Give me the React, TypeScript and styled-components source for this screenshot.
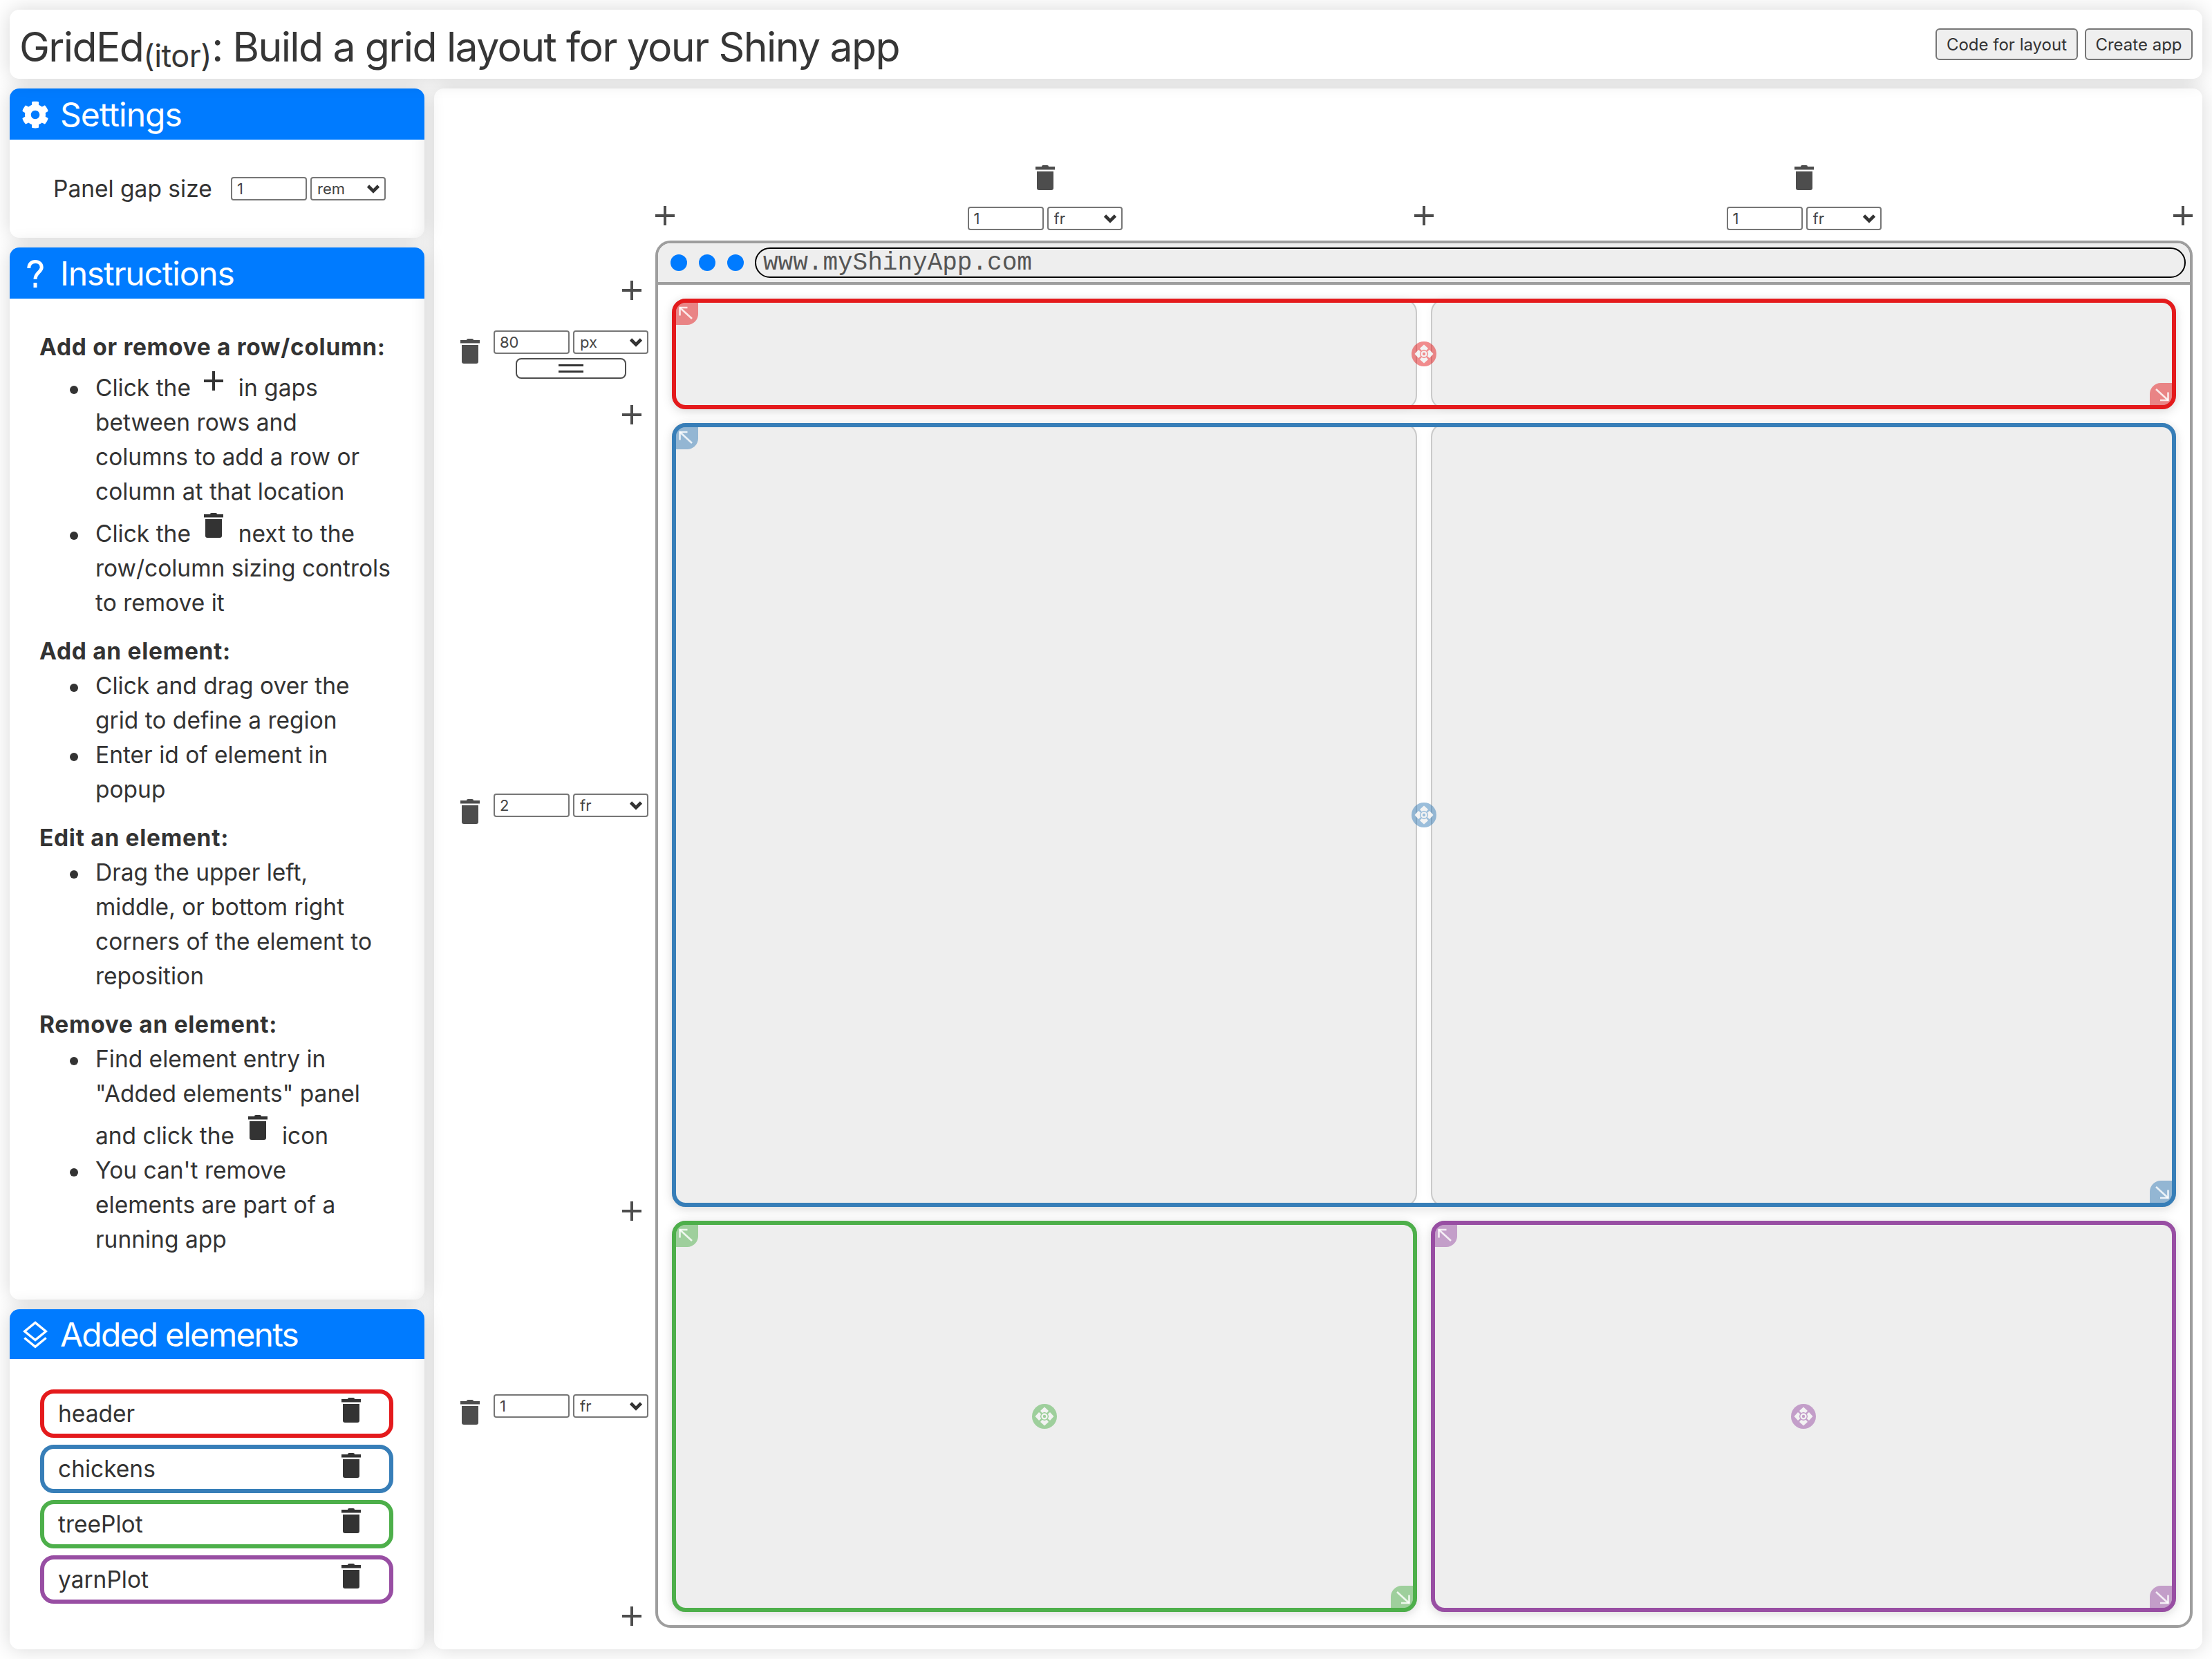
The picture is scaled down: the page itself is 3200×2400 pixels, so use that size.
import React from 'react';
import styled, { createGlobalStyle } from 'styled-components';
import { FaCog } from 'react-icons/fa';

const Global = createGlobalStyle`
  html, body { margin: 0; padding: 0; background: #fff; }
  * { box-sizing: border-box; }
  body { font-family: Inter, "Liberation Sans", sans-serif; color: #333; }
`;

const Page = styled.div`
  width: 3200px;
  height: 2400px;
  padding: 14px;
  display: grid;
  grid-template-columns: 600px 1fr;
  grid-template-rows: 100px 1fr;
  gap: 14px;
  overflow: hidden;
`;

const shadow = '0 0 30px rgba(0, 0, 0, 0.16)';

const Main = styled.main`
  grid-column: 2;
  grid-row: 2;
  background: #fff;
  border-radius: 14px;
  box-shadow: ${shadow};
  display: grid;
  grid-template-columns: 320px 2224px;
  grid-template-rows: 220px 2007px;
`;

const Sidebar = styled.aside`
  grid-column: 1;
  grid-row: 2;
  display: grid;
  grid-template-rows: 216px 1522px 1fr;
  gap: 14px;
  min-height: 0;
`;

const TitleBar = styled.header`
  grid-column: 1 / 3;
  grid-row: 1;
  background: #fff;
  border-radius: 14px;
  box-shadow: ${shadow};
  display: flex;
  align-items: center;
  justify-content: space-between;
  padding: 0 14px;
`;

const Title = styled.h1`
  margin: 6px 0 0;
  font-size: 59px;
  font-weight: 400;
  line-height: 1;
  letter-spacing: -1.65px;
  color: #363636;
  white-space: nowrap;
  sub {
    font-size: 45px;
    vertical-align: -8px;
    line-height: 0;
    letter-spacing: -0.5px;
  }
`;

const Actions = styled.div`
  display: flex;
  gap: 10px;
`;

const ActionButton = styled.button<{ $w: number }>`
  width: ${(p) => p.$w}px;
  height: 46px;
  padding: 0;
  background: #efefef;
  border: 2px solid #767676;
  border-radius: 6px;
  color: #333;
  font-family: inherit;
  font-size: 24px;
  text-align: center;
`;

const Card = styled.section`
  background: #fff;
  border-radius: 14px;
  box-shadow: ${shadow}, inset -22px 0 20px -20px rgba(0, 0, 0, 0.07);
  display: flex;
  flex-direction: column;
  min-height: 0;
`;

const CardHead = styled.h2<{ $h: number; $track: number }>`
  margin: 0;
  flex: none;
  height: ${(p) => p.$h}px;
  padding-top: 2px;
  background: #007bff;
  color: #fff;
  border-radius: 14px 14px 0 0;
  display: flex;
  align-items: center;
  font-size: 48px;
  font-weight: 400;
  line-height: 1;
  letter-spacing: ${(p) => p.$track}px;
`;

const HeadIcon = styled.span`
  width: 73px;
  display: flex;
  justify-content: center;
  align-items: center;
  flex: none;
`;

const SettingsBody = styled.div`
  flex: 1;
  display: flex;
  align-items: center;
  padding-left: 63px;
  font-size: 33.5px;
`;

const GapLabel = styled.span`
  flex: none;
  width: 257px;
`;

const SizeInput = styled.input`
  width: 110px;
  height: 34px;
  padding: 0 7px;
  margin: 0;
  background: #fff;
  border: 2px solid #767676;
  border-radius: 4px;
  color: #444;
  font-family: inherit;
  font-size: 22px;
  outline: none;
`;

const UnitSelect = styled.select`
  appearance: none;
  width: 109px;
  height: 34px;
  padding: 0 0 0 8px;
  margin: 0 0 0 5px;
  border: 2px solid #767676;
  border-radius: 4px;
  color: #444;
  font-family: inherit;
  font-size: 22px;
  background: #fff url("data:image/svg+xml,%3Csvg xmlns='http://www.w3.org/2000/svg' width='20' height='14' viewBox='0 0 20 14'%3E%3Cpath d='M2.5 3 L10 10.5 L17.5 3' fill='none' stroke='%23333' stroke-width='4.6'/%3E%3C/svg%3E") no-repeat right 6px center;
`;

const InstructionBody = styled.div`
  padding: 45px 45px 0 43px;
  font-size: 33.5px;
  line-height: 50px;
`;

const Lead = styled.div`
  font-weight: 700;
  letter-spacing: 0.7px;
  color: #333;
`;

const Steps = styled.ul`
  margin: 0 0 20px;
  padding-left: 81px;
  list-style: none;
  li::before {
    content: '';
    display: inline-block;
    width: 12px;
    height: 12px;
    border-radius: 50%;
    background: #333;
    margin-left: -37px;
    margin-right: 25px;
    vertical-align: 3px;
  }
`;

const InlineIcon = styled.span<{ $lift: number; $top: number }>`
  display: inline-block;
  margin: ${(p) => p.$top}px 12px 0 10px;
  color: #333;
  vertical-align: ${(p) => p.$lift}px;
  line-height: 0;
`;

const ElementList = styled.div`
  padding: 44px 45px 0 44px;
  display: flex;
  flex-direction: column;
  gap: 10px;
`;

const ElementRow = styled.div<{ $c: string }>`
  height: 70px;
  border: 6px solid ${(p) => p.$c};
  border-radius: 20px;
  display: flex;
  justify-content: space-between;
  padding: 0 41px 0 20px;
  font-size: 33.5px;
  line-height: 58px;
  color: #333;
`;

const RowTrash = styled.span`
  margin-top: 6px;
  line-height: 0;
`;

const ColumnGutter = styled.div`
  grid-column: 2;
  grid-row: 1;
  display: grid;
  grid-template-columns: 28px 1070px 28px 1070px 28px;
  align-items: end;
`;

const Plus = styled.span<{ $side?: boolean }>`
  display: block;
  width: 28px;
  height: 28px;
  line-height: 0;
  color: #4d4d4d;
  margin-bottom: ${(p) => (p.$side ? 0 : 22)}px;
  ${(p) => (p.$side ? 'justify-self: end; margin-right: 20px;' : '')}
`;

const ColumnControl = styled.div`
  display: flex;
  flex-direction: column;
  align-items: center;
  margin-bottom: 15px;
  padding-left: 1px;
  color: #4d4d4d;
`;

const ColumnTrash = styled.span`
  line-height: 0;
  margin-bottom: 24px;
`;

const Pair = styled.div`
  display: flex;
`;

const RowGutter = styled.div`
  grid-column: 1;
  grid-row: 2;
  display: grid;
  grid-template-rows: 28px 152px 28px 1124px 28px 558px 28px;
  padding-top: 58px;
  align-items: center;
`;

const RowControl = styled.div<{ $nudge: number }>`
  justify-self: end;
  margin: ${(p) => p.$nudge}px 10px 0 0;
  display: flex;
  align-items: center;
  gap: 20px;
  color: #4d4d4d;
`;

const RowTrashSlot = styled.span<{ $up: number }>`
  line-height: 0;
  margin-bottom: ${(p) => p.$up}px;
`;

const RowStack = styled.div`
  display: flex;
  flex-direction: column;
  align-items: center;
  gap: 6px;
`;

const DragBar = styled.button<{ $hidden?: boolean }>`
  width: 160px;
  height: 30px;
  padding: 0;
  background: #fff;
  border: 2px solid #4d4d4d;
  border-radius: 8px;
  display: flex;
  flex-direction: column;
  align-items: center;
  justify-content: center;
  gap: 6px;
  visibility: ${(p) => (p.$hidden ? 'hidden' : 'visible')};
  i {
    display: block;
    width: 36px;
    height: 3px;
    background: #333;
  }
`;

const Frame = styled.div`
  grid-column: 2;
  grid-row: 2;
  border: 4px solid #9e9e9e;
  border-radius: 22px;
  display: flex;
  flex-direction: column;
`;

const BrowserBar = styled.div`
  flex: none;
  height: 60px;
  background: #eee;
  border-bottom: 4px solid #9e9e9e;
  border-radius: 18px 18px 0 0;
  display: flex;
  align-items: center;
  padding: 0 6px 0 18px;
`;

const Dot = styled.span`
  width: 24px;
  height: 24px;
  border-radius: 50%;
  background: #007bff;
  margin-right: 17px;
  flex: none;
`;

const UrlBox = styled.div`
  flex: 1;
  height: 44px;
  margin-left: -1px;
  border: 2px solid #000;
  border-radius: 22px;
  padding-left: 10px;
  font-family: "Liberation Mono", monospace;
  font-size: 36px;
  line-height: 42px;
  color: #555;
`;

const GridArea = styled.div`
  flex: 1;
  display: grid;
  grid-template-columns: 1078px 1078px;
  grid-template-rows: 160px 1134px 566px;
  gap: 20px;
  padding: 20px 20px 0 20px;
`;

const Cell = styled.div<{ $r: number; $c: number }>`
  grid-row: ${(p) => p.$r};
  grid-column: ${(p) => p.$c};
  background: #eee;
  border: 2px solid #c9c9c9;
  border-radius: 20px;
  box-shadow: 0 0 12px rgba(0, 0, 0, 0.04);
`;

const Placed = styled.div<{ $r: number; $c: string; $color: string }>`
  grid-row: ${(p) => p.$r};
  grid-column: ${(p) => p.$c};
  position: relative;
  border: 6px solid ${(p) => p.$color};
  border-radius: 20px;
  box-shadow: 0 4px 16px rgba(0, 0, 0, 0.12);
`;

const CornerHandle = styled.span<{ $color: string; $end?: boolean }>`
  position: absolute;
  width: 32px;
  height: 32px;
  line-height: 0;
  ${(p) =>
    p.$end
      ? 'right: 0; bottom: 0; border-radius: 16px 0 14px 0;'
      : 'left: 0; top: 0; border-radius: 14px 0 16px 0;'}
  background: ${(p) => p.$color}80;
  color: #fff;
`;

const MoveHandle = styled.span<{ $color: string }>`
  position: absolute;
  left: 50%;
  top: 50%;
  width: 36px;
  height: 36px;
  margin: -18px 0 0 -18px;
  border-radius: 50%;
  line-height: 0;
  background: ${(p) => p.$color}80;
`;

const TrashIcon = () => (
  <svg width="28" height="36" viewBox="0 0 28 36" fill="currentColor">
    <path d="M9 2 Q9 0 11 0 H17 Q19 0 19 2 Z" />
    <rect x="0" y="2" width="28" height="4.5" />
    <path d="M2 9 H26 V33 Q26 36 23 36 H5 Q2 36 2 33 Z" />
  </svg>
);

const PlusIcon = () => (
  <svg width="28" height="28" viewBox="0 0 28 28" fill="currentColor">
    <rect x="12" y="0" width="4" height="28" />
    <rect x="0" y="12" width="28" height="4" />
  </svg>
);

const HelpIcon = () => (
  <svg width="24" height="40" viewBox="0 0 24 40" fill="none" stroke="#fff" strokeWidth="5">
    <path d="M2.8 12 C2.8 6 6.5 2.6 12 2.6 C17.5 2.6 21.2 6 21.2 10.8 C21.2 17.5 12 18.5 12 28" />
    <rect x="9.5" y="33" width="5" height="7" fill="#fff" stroke="none" />
  </svg>
);

const LayersIcon = () => (
  <svg width="36" height="40" viewBox="0 0 36 40" fill="none" stroke="#fff" strokeWidth="3.4">
    <path d="M18 2.4 L33.4 15 L18 27.6 L2.6 15 Z" />
    <path d="M2.4 24.5 L18 37.2 L33.6 24.5" />
  </svg>
);

const ArrowStart = () => (
  <svg width="32" height="32" viewBox="0 0 32 32" fill="none" stroke="#fff" strokeOpacity="0.82" strokeWidth="2.6">
    <path d="M5.5 7 L23 23" />
    <path d="M16.5 7 H5.5 V18.5" />
  </svg>
);

const ArrowEnd = () => (
  <svg width="32" height="32" viewBox="0 0 32 32" fill="none" stroke="#fff" strokeOpacity="0.82" strokeWidth="2.6">
    <path d="M9 9 L26.5 25" />
    <path d="M15 25 H26.5 V13.5" />
  </svg>
);

const MoveIcon = () => (
  <svg width="36" height="36" viewBox="0 0 36 36" fill="#f3f3f3">
    {[0, 90, 180, 270].map((a) => (
      <polygon key={a} points="18,4.5 24,10 21.5,13 18,11.8 14.5,13 12,10" transform={`rotate(${a} 18 18)`} />
    ))}
    <circle cx="18" cy="18" r="3.4" fill="none" stroke="#f3f3f3" strokeWidth="2.4" />
  </svg>
);

const Sizer = ({ value, unit }: { value: string; unit: string }) => (
  <Pair>
    <SizeInput defaultValue={value} />
    <UnitSelect defaultValue={unit}>
      <option>fr</option>
      <option>px</option>
      <option>rem</option>
    </UnitSelect>
  </Pair>
);

const RowSizing = ({ value, unit, drag, nudge }: { value: string; unit: string; drag?: boolean; nudge: number }) => (
  <RowControl $nudge={nudge}>
    <RowTrashSlot $up={drag ? 10 : 18}>
      <TrashIcon />
    </RowTrashSlot>
    <RowStack>
      <Sizer value={value} unit={unit} />
      <DragBar $hidden={!drag}>
        <i />
        <i />
      </DragBar>
    </RowStack>
  </RowControl>
);

const ColumnSizing = () => (
  <ColumnControl>
    <ColumnTrash>
      <TrashIcon />
    </ColumnTrash>
    <Sizer value="1" unit="fr" />
  </ColumnControl>
);

const PlusInline = () => (
  <InlineIcon $lift={8} $top={10}>
    <PlusIcon />
  </InlineIcon>
);

const TrashInline = () => (
  <InlineIcon $lift={6} $top={6}>
    <TrashIcon />
  </InlineIcon>
);

const elements = [
  { id: 'header', color: '#e41a1c', row: 1, col: '1 / 3' },
  { id: 'chickens', color: '#377eb8', row: 2, col: '1 / 3' },
  { id: 'treePlot', color: '#4daf4a', row: 3, col: '1' },
  { id: 'yarnPlot', color: '#984ea3', row: 3, col: '2' },
];

const cells = [1, 2, 3].flatMap((r) => [1, 2].map((c) => ({ r, c })));

export default function App() {
  return (
    <>
      <Global />
      <Page>
        <Main>
          <ColumnGutter>
            <Plus><PlusIcon /></Plus>
            <ColumnSizing />
            <Plus><PlusIcon /></Plus>
            <ColumnSizing />
            <Plus><PlusIcon /></Plus>
          </ColumnGutter>
          <RowGutter>
            <Plus $side><PlusIcon /></Plus>
            <RowSizing value="80" unit="px" drag nudge={6} />
            <Plus $side><PlusIcon /></Plus>
            <RowSizing value="2" unit="fr" nudge={14} />
            <Plus $side><PlusIcon /></Plus>
            <RowSizing value="1" unit="fr" nudge={14} />
            <Plus $side><PlusIcon /></Plus>
          </RowGutter>
          <Frame>
            <BrowserBar>
              <Dot />
              <Dot />
              <Dot />
              <UrlBox>www.myShinyApp.com</UrlBox>
            </BrowserBar>
            <GridArea>
              {cells.map((x) => (
                <Cell key={`${x.r}-${x.c}`} $r={x.r} $c={x.c} />
              ))}
              {elements.map((e) => (
                <Placed key={e.id} $r={e.row} $c={e.col} $color={e.color}>
                  <CornerHandle $color={e.color}><ArrowStart /></CornerHandle>
                  <MoveHandle $color={e.color}><MoveIcon /></MoveHandle>
                  <CornerHandle $color={e.color} $end><ArrowEnd /></CornerHandle>
                </Placed>
              ))}
            </GridArea>
          </Frame>
        </Main>
        <Sidebar>
          <Card>
            <CardHead $h={74} $track={-1}>
              <HeadIcon><FaCog size={40} /></HeadIcon>
              Settings
            </CardHead>
            <SettingsBody>
              <GapLabel>Panel gap size</GapLabel>
              <Sizer value="1" unit="rem" />
            </SettingsBody>
          </Card>
          <Card>
            <CardHead $h={74} $track={-1.2}>
              <HeadIcon><HelpIcon /></HeadIcon>
              Instructions
            </CardHead>
            <InstructionBody>
              <Lead>Add or remove a row/column:</Lead>
              <Steps>
                <li>Click the <PlusInline /> in gaps between rows and columns to add a row or column at that location</li>
                <li>Click the <TrashInline /> next to the row/column sizing controls to remove it</li>
              </Steps>
              <Lead>Add an element:</Lead>
              <Steps>
                <li>Click and drag over the grid to define a region</li>
                <li>Enter id of element in popup</li>
              </Steps>
              <Lead>Edit an element:</Lead>
              <Steps>
                <li>Drag the upper left, middle, or bottom right corners of the element to reposition</li>
              </Steps>
              <Lead>Remove an element:</Lead>
              <Steps>
                <li>Find element entry in "Added elements" panel and click the <TrashInline /> icon</li>
                <li>You can't remove<br />elements are part of a running app</li>
              </Steps>
            </InstructionBody>
          </Card>
          <Card>
            <CardHead $h={72} $track={-1.8}>
              <HeadIcon><LayersIcon /></HeadIcon>
              Added elements
            </CardHead>
            <ElementList>
              {elements.map((e) => (
                <ElementRow key={e.id} $c={e.color}>
                  {e.id}
                  <RowTrash><TrashIcon /></RowTrash>
                </ElementRow>
              ))}
            </ElementList>
          </Card>
        </Sidebar>
        <TitleBar>
          <Title>GridEd<sub>(itor)</sub>: Build a grid layout for your Shiny app</Title>
          <Actions>
            <ActionButton $w={206}>Code for layout</ActionButton>
            <ActionButton $w={156}>Create app</ActionButton>
          </Actions>
        </TitleBar>
      </Page>
    </>
  );
}
